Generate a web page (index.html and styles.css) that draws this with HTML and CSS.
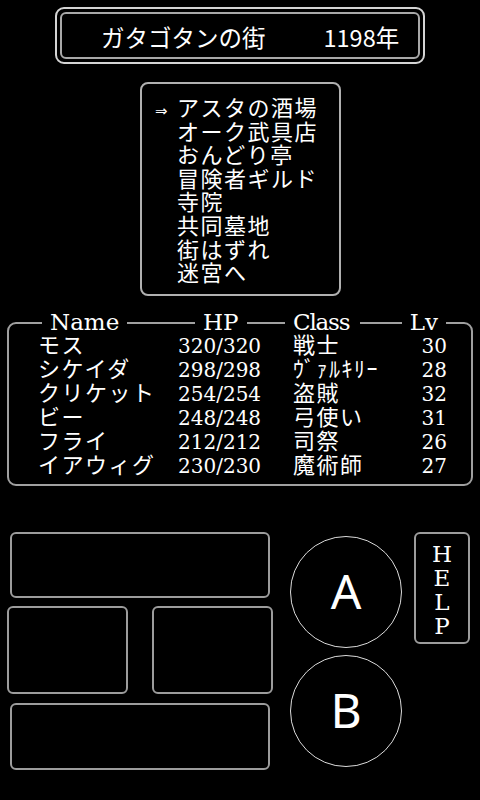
FILE: index.html
```html
<!DOCTYPE html>
<html lang="ja">
<head>
    <meta charset="UTF-8">
    <meta name="viewport" content="width=device-width, initial-scale=1.0">
    <title>ガタゴタンの街</title>
    <link rel="stylesheet" href="styles.css">
</head>
<body>
    <div class="screen">

        <header class="town">
            <div class="town-inner">
                <span class="town-name">ガタゴタンの街</span>
                <span class="town-year">1198年</span>
            </div>
        </header>

        <nav class="menu">
            <ul>
                <li class="selected">アスタの酒場</li>
                <li>オーク武具店</li>
                <li>おんどり亭</li>
                <li>冒険者ギルド</li>
                <li>寺院</li>
                <li>共同墓地</li>
                <li>街はずれ</li>
                <li>迷宮へ</li>
            </ul>
        </nav>

        <section class="party">
            <div class="party-head">
                <span class="h-name">Name</span>
                <span class="h-hp">HP</span>
                <span class="h-class">Class</span>
                <span class="h-lv">Lv</span>
            </div>
            <div class="party-row"><span>モス</span><span class="num">320/320</span><span>戦士</span><span class="num lv">30</span></div>
            <div class="party-row"><span>シケイダ</span><span class="num">298/298</span><span>ｳﾞｧﾙｷﾘｰ</span><span class="num lv">28</span></div>
            <div class="party-row"><span>クリケット</span><span class="num">254/254</span><span>盗賊</span><span class="num lv">32</span></div>
            <div class="party-row"><span>ビー</span><span class="num">248/248</span><span>弓使い</span><span class="num lv">31</span></div>
            <div class="party-row"><span>フライ</span><span class="num">212/212</span><span>司祭</span><span class="num lv">26</span></div>
            <div class="party-row"><span>イアウィグ</span><span class="num">230/230</span><span>魔術師</span><span class="num lv">27</span></div>
        </section>

        <div class="controls">
            <div class="pad">
                <div class="pad-key pad-wide"></div>
                <div class="pad-mid">
                    <div class="pad-key"></div>
                    <div class="pad-key"></div>
                </div>
                <div class="pad-key pad-wide pad-bottom"></div>
            </div>
            <div class="buttons">
                <button class="round">A</button>
                <button class="round">B</button>
            </div>
            <button class="help"><span>H</span><span>E</span><span>L</span><span>P</span></button>
        </div>

    </div>
</body>
</html>
```

FILE: styles.css
```css
* {
    box-sizing: border-box;
}

body {
    margin: 0;
    background-color: #000;
    color: #fff;
    font-family: "Noto Sans CJK JP", "Noto Sans", sans-serif;
}

.screen {
    width: 480px;
    height: 800px;
    padding-top: 7px;
    overflow: hidden;
}

/* town banner */
.town {
    width: 370px;
    height: 57px;
    margin-left: 55px;
    border: 2px solid #d4d4d4;
    border-radius: 9px;
    padding: 3px;
}

.town-inner {
    height: 100%;
    border: 2px solid #a8a8a8;
    border-radius: 6px;
    display: flex;
    align-items: center;
    padding: 3px 0 0 39px;
    font-size: 23.5px;
    line-height: 24px;
}

.town-year {
    margin-left: 58px;
}

/* facility menu */
.menu {
    width: 201px;
    height: 214px;
    margin: 18px 0 0 140px;
    border: 2px solid #b0b0b0;
    border-radius: 8px;
    padding-top: 11px;
}

.menu ul {
    list-style: none;
    margin: 0;
    padding: 0 0 0 35px;
    font-size: 22px;
    letter-spacing: 1.5px;
    line-height: 23.6px;
}

.menu .selected::before {
    content: "⇒";
    display: inline-block;
    width: 22px;
    margin-left: -22px;
    font-family: "DejaVu Sans", sans-serif;
    font-size: 15px;
    line-height: 12px;
    letter-spacing: 0;
}

/* party list */
.party {
    width: 466px;
    margin: 26px 0 0 7px;
    border: 2px solid #a0a0a0;
    border-radius: 9px;
    padding: 0 24px 9px 29px;
}

.party-head,
.party-row {
    display: grid;
    grid-template-columns: 140px 115px 1fr 40px;
}

.party-head {
    margin-top: -11px;
    font-family: "DejaVu Serif", serif;
    font-size: 23px;
    line-height: 18px;
}

.party-head span {
    justify-self: start;
    background-color: #000;
    padding: 0 8px;
}

.h-name {
    margin-left: 4px;
}

.h-hp {
    margin-left: 17px;
}

.party-head .h-class {
    margin-left: -8px;
    letter-spacing: -1.2px;
    padding-right: 11px;
}

.party-head .h-lv {
    justify-self: end;
    margin-right: 1px;
}

.party-row {
    align-items: baseline;
    font-size: 22px;
    letter-spacing: 1.5px;
    line-height: 24px;
    white-space: nowrap;
}

.num {
    font-family: "DejaVu Serif", serif;
    font-size: 20px;
    letter-spacing: 0;
    line-height: 16px;
}

.lv {
    text-align: right;
}

/* touch controls */
.controls {
    display: flex;
    align-items: flex-start;
    margin-top: 46px;
}

.pad {
    width: 266px;
    margin-left: 7px;
    display: flex;
    flex-direction: column;
}

.pad-key {
    border: 2px solid #9c9c9c;
    border-radius: 6px;
}

.pad-wide {
    height: 66px;
    margin: 0 3px;
}

.pad-bottom {
    height: 67px;
}

.pad-mid {
    display: flex;
    justify-content: space-between;
    margin: 8px 0 9px;
}

.pad-mid .pad-key {
    width: 121px;
    height: 88px;
}

.buttons {
    display: flex;
    flex-direction: column;
    gap: 7px;
    margin: 4px 0 0 17px;
}

.round {
    width: 112px;
    height: 112px;
    padding: 0 0 4px;
    border: 1px solid #dcdcdc;
    border-radius: 50%;
    background: transparent;
    color: #fff;
    font-family: "Noto Sans", sans-serif;
    font-size: 48px;
}

.help {
    width: 56px;
    height: 112px;
    margin-left: 12px;
    padding: 8px 0 0;
    border: 2px solid #9c9c9c;
    border-radius: 6px;
    background: transparent;
    color: #fff;
    display: flex;
    flex-direction: column;
    align-items: center;
    font-family: "DejaVu Serif", serif;
    font-size: 23px;
    line-height: 24px;
}
```
